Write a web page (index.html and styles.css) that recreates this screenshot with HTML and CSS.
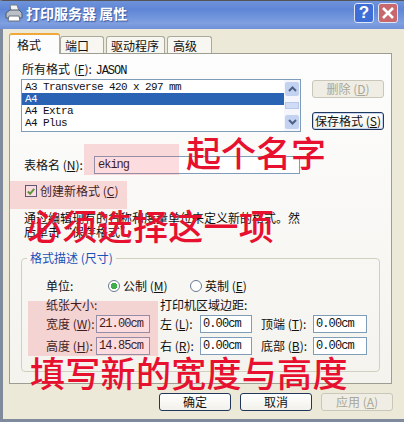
FILE: index.html

```html
<!DOCTYPE html>
<html>
<head>
  <title>打印服务器 属性</title>
  <link rel="stylesheet" href="styles.css">
</head>
<body>
  <div class="window">
    <div class="titlebar">
      <svg class="title-icon" width="18" height="18" viewBox="0 0 18 18">
        <path d="M5 1 L12 1 L14 7 L6 7 Z" fill="#f4f4f4" stroke="#6b7a8c"/>
        <path d="M1 9 L5 6 L14 6 L17 9 L17 14 L1 14 Z" fill="#b9c0c8" stroke="#4d5a68"/>
        <path d="M4 12 L14 12 L15 17 L3 17 Z" fill="#fff" stroke="#66707c"/>
      </svg>
      <span class="title-text">打印服务器 属性</span>
      <span class="title-btn help">?</span>
      <span class="title-btn close">
        <svg width="14" height="14" viewBox="0 0 14 14"><path d="M2 2 L12 12 M12 2 L2 12" stroke="#fff" stroke-width="2.6"/></svg>
      </span>
    </div>

    <div class="tabs">
      <div class="tab active">格式</div>
      <div class="tab">端口</div>
      <div class="tab">驱动程序</div>
      <div class="tab tab-last">高级</div>
    </div>

    <div class="panel">
      <div class="all-label">所有格式 (<u>F</u>): <span class="mono">JASON</span></div>
      <div class="list-row">
        <div class="list">
          <div class="list-items">
            <div class="item">A3 Transverse 420 x 297 mm</div>
            <div class="item selected">A4</div>
            <div class="item">A4 Extra</div>
            <div class="item">A4 Plus</div>
          </div>
          <div class="scroll">
            <div class="scroll-btn">
              <svg width="9" height="6" viewBox="0 0 9 6"><path d="M1 5 L4.5 1.5 L8 5" fill="none" stroke="#4d6185" stroke-width="2"/></svg>
            </div>
            <div class="scroll-thumb"></div>
            <div class="scroll-btn">
              <svg width="9" height="6" viewBox="0 0 9 6"><path d="M1 1 L4.5 4.5 L8 1" fill="none" stroke="#4d6185" stroke-width="2"/></svg>
            </div>
          </div>
        </div>
        <div class="list-actions">
          <button class="btn disabled">删除 (<u>D</u>)</button>
          <button class="btn default">保存格式 (<u>S</u>)</button>
        </div>
      </div>

      <div class="name-row">
        <span class="name-label">表格名 (<u>N</u>):</span>
        <div class="field name-field mono">eking</div>
      </div>

      <label class="check-row">
        <span class="check">
          <svg width="11" height="11" viewBox="0 0 11 11"><path d="M2 5.5 L4.5 8 L9 2.5" fill="none" stroke="#3aa53a" stroke-width="2.2"/></svg>
        </span>
        <span>创建新格式 (<u>C</u>)</span>
      </label>

      <p class="desc">通过编辑现有的名称和度量单位来定义新的格式。然<br>后单击“保存格式”。</p>

      <fieldset class="group">
        <legend>格式描述 (尺寸)</legend>
        <div class="unit-row">
          <span class="unit-label">单位:</span>
          <span class="radio on"></span><span class="radio-text">公制 (<u>M</u>)</span>
          <span class="radio"></span><span>英制 (<u>E</u>)</span>
        </div>
        <div class="size-grid">
          <span class="col-paper">纸张大小:</span>
          <span class="col-margin">打印机区域边距:</span>

          <span class="lbl">宽度 (<u>W</u>):</span>
          <div class="field num">21.00cm</div>
          <span class="lbl">左 (<u>L</u>):</span>
          <div class="field num">0.00cm</div>
          <span class="lbl">顶端 (<u>T</u>):</span>
          <div class="field num">0.00cm</div>

          <span class="lbl">高度 (<u>H</u>):</span>
          <div class="field num">14.85cm</div>
          <span class="lbl">右 (<u>R</u>):</span>
          <div class="field num">0.00cm</div>
          <span class="lbl">底部 (<u>B</u>):</span>
          <div class="field num">0.00cm</div>
        </div>
      </fieldset>
    </div>

    <div class="footer">
      <button class="btn">确定</button>
      <button class="btn">取消</button>
      <button class="btn disabled">应用 (<u>A</u>)</button>
    </div>
  </div>

  <!-- annotations painted over the dialog -->
  <div class="mark mark-name"></div>
  <div class="mark mark-check"></div>
  <div class="mark mark-size"></div>
  <div class="note note-name">起个名字</div>
  <div class="note note-check">必须选择这一项</div>
  <div class="note note-size">填写新的宽度与高度</div>
</body>
</html>
```

FILE: styles.css

```css
* {
  box-sizing: border-box;
}
body {
  margin: 0;
  width: 404px;
  height: 422px;
  overflow: hidden;
  font-family: "Noto Sans CJK SC", "Liberation Sans", sans-serif;
  font-size: 12px;
  line-height: 14px;
  color: #111;
}
u {
  text-decoration: underline;
}
.mono {
  font-family: "Liberation Mono", monospace;
  letter-spacing: -1px;
  font-size: 12px;
}
.window {
  width: 404px;
  height: 422px;
  background: #ece9d8;
  border-left: 3px solid #7f8b9c;
  border-bottom: 3px solid #7f8b9c;
  border-top: 1px solid #555;
  display: flex;
  flex-direction: column;
}
.titlebar {
  height: 28px;
  margin-left: -3px;
  padding: 0 6px 4px 5px;
  background: linear-gradient(#6f93da, #5f86d6 30%, #7f9fe0 80%, #6f8fd8);
  display: flex;
  align-items: center;
  flex-shrink: 0;
}
.title-icon {
  margin-right: 3px;
}
.title-text {
  flex: 1;
  color: #fff;
  font-size: 14px;
  font-weight: bold;
  text-shadow: 1px 1px 1px #3b5aa0;
}
.title-btn {
  width: 20px;
  height: 20px;
  margin-left: 4px;
  border: 1px solid #dfe6f6;
  border-radius: 3px;
  color: #fff;
  display: flex;
  align-items: center;
  justify-content: center;
}
.help {
  background: #3f6fd6;
  font-family: "Liberation Sans", sans-serif;
  font-size: 17px;
  font-weight: bold;
}
.close {
  background: #c9686c;
}
.tabs {
  display: flex;
  align-items: flex-end;
  height: 24px;
  padding-left: 6px;
  flex-shrink: 0;
}
.tab {
  height: 17px;
  padding: 2px 4px 0 4px;
  margin-right: 2px;
  background: #f7f6f0;
  border: 1px solid #a9a99c;
  border-bottom: none;
  border-radius: 3px 3px 0 0;
  white-space: nowrap;
}
.tab:nth-child(2) {
  width: 44px;
}
.tab:nth-child(3) {
  width: 59px;
}
.tab-last {
  width: 45px;
  padding-left: 5px;
}
.tab.active {
  height: 21px;
  width: 51px;
  padding: 3px 0 0 7px;
  margin-right: 0;
  margin-bottom: -1px;
  background: #fcfcfc;
  border-top: 2px solid #f0a83a;
  position: relative;
}
.panel {
  width: 383px;
  height: 331px;
  margin-left: 6px;
  padding: 8px 0 0 11px;
  background: linear-gradient(#fdfdfd, #f4f3ee);
  border: 1px solid #9d9d92;
  flex-shrink: 0;
}
.all-label {
  margin-left: 1px;
  height: 17px;
  word-spacing: 1px;
}
.list-row {
  display: flex;
  gap: 11px;
}
.list {
  width: 280px;
  height: 53px;
  background: #fff;
  border: 1px solid #7f9db9;
  display: flex;
  flex-shrink: 0;
}
.list-items {
  flex: 1;
  padding-top: 1px;
  font-family: "Liberation Mono", monospace;
  font-size: 11px;
  letter-spacing: -0.6px;
}
.item {
  height: 12px;
  line-height: 12px;
  padding-left: 3px;
}
.selected {
  background: #2a62b4;
  color: #fff;
}
.scroll {
  width: 16px;
  padding: 2px 1px;
  display: flex;
  flex-direction: column;
  justify-content: space-between;
  align-items: center;
  background: #f4f6fb;
}
.scroll-btn {
  width: 14px;
  height: 14px;
  background: #c4d2f2;
  border-radius: 2px;
  display: flex;
  align-items: center;
  justify-content: center;
}
.scroll-thumb {
  width: 14px;
  height: 7px;
  background: #d0dcf6;
  border: 1px solid #b8c8ea;
}
.list-actions {
  display: flex;
  flex-direction: column;
  gap: 14px;
  padding-top: 1px;
}
.btn {
  width: 72px;
  height: 18px;
  padding: 0;
  font-family: inherit;
  font-size: 12px;
  line-height: 14px;
  color: #111;
  background: linear-gradient(#fff, #f2f1ea);
  border: 1px solid #22375c;
  border-radius: 3px;
}
.btn.disabled {
  color: #a8a698;
  background: #f0eee4;
  border-color: #c9c7ba;
}
.btn.default {
  box-shadow: inset 0 0 0 1px #c5d4f0;
}
.name-row {
  display: flex;
  align-items: center;
  margin-top: 24px;
  padding-left: 3px;
}
.name-label {
  width: 70px;
}
.field {
  height: 18px;
  background: #fff;
  border: 1px solid #7f9db9;
  padding-left: 3px;
  line-height: 16px;
}
.name-field {
  width: 206px;
}
.check-row {
  display: flex;
  align-items: center;
  margin-top: 10px;
  padding-left: 4px;
  height: 14px;
  gap: 3px;
}
.check {
  width: 12px;
  height: 12px;
  background: #fff;
  border: 1px solid #3d5a78;
  display: flex;
  align-items: center;
  justify-content: center;
}
.desc {
  margin: 13px 0 0 3px;
  white-space: nowrap;
}
.group {
  width: 359px;
  height: 121px;
  margin: 12px 0 0;
  padding: 0 0 0 24px;
  border: 1px solid #d0d0bf;
  border-radius: 4px;
}
.group legend {
  padding: 0 3px;
  margin-left: -19px;
  color: #1a50b8;
}
.unit-row {
  display: flex;
  align-items: center;
  height: 14px;
  margin-top: 14px;
}
.unit-label {
  width: 62px;
}
.radio {
  width: 12px;
  height: 12px;
  margin-right: 3px;
  background: #fff;
  border: 1px solid #6a7a90;
  border-radius: 50%;
}
.radio.on {
  background: radial-gradient(circle, #3fae4a 0 3px, #fff 3.5px);
}
.radio-text {
  width: 67px;
}
.size-grid {
  display: grid;
  grid-template-columns: 50px 54px 50px 52px 61px 54px;
  grid-auto-rows: 22px;
  align-items: center;
  margin-top: -2px;
}
.col-paper {
  grid-column: 1 / 3;
  align-self: end;
  padding-bottom: 1px;
}
.col-margin {
  grid-column: 3 / 7;
  align-self: end;
  padding-bottom: 1px;
  padding-left: 10px;
}
.lbl {
  white-space: nowrap;
}
.lbl:nth-child(5), .lbl:nth-child(11) {
  padding-left: 10px;
}
.lbl:nth-child(7), .lbl:nth-child(13) {
  padding-left: 9px;
}
.num {
  font-size: 12px;
  font-family: "Liberation Mono", monospace;
  letter-spacing: -0.9px;
  padding-left: 2px;
}
.footer {
  display: flex;
  justify-content: flex-end;
  gap: 9px;
  padding: 9px 11px 0 0;
}

/* annotations */
.mark {
  position: absolute;
  background: rgba(240, 80, 90, 0.2);
}
.mark-name {
  left: 84px;
  top: 144px;
  width: 95px;
  height: 31px;
}
.mark-check {
  left: 10px;
  top: 181px;
  width: 117px;
  height: 28px;
}
.mark-size {
  left: 28px;
  top: 301px;
  width: 130px;
  height: 55px;
}
.note {
  position: absolute;
  color: #e8102f;
  font-size: 35px;
  font-weight: 500;
  line-height: 40px;
  white-space: nowrap;
}
.note-name {
  left: 186px;
  top: 132px;
}
.note-check {
  left: 27px;
  top: 205px;
  letter-spacing: 0.3px;
}
.note-size {
  left: 30px;
  top: 352px;
  letter-spacing: 0.3px;
}
```
